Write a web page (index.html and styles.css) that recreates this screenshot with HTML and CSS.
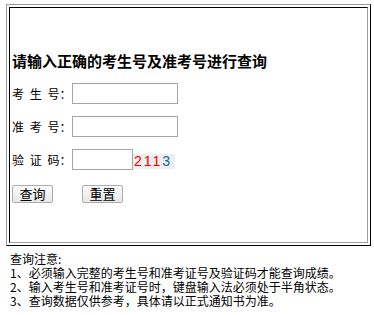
FILE: index.html
```html
<!DOCTYPE html>
<html lang="zh-CN">
<head>
    <meta charset="UTF-8">
    <meta name="viewport" content="width=device-width, initial-scale=1.0">
    <title>成绩查询</title>
    <link rel="stylesheet" href="styles.css">
</head>
<body>
    <div class="box">
        <div class="cell">
            <h3 class="title">请输入正确的考生号及准考号进行查询</h3>
            <form class="query-form">
                <div class="row">
                    <label for="ksh">考 生 号：</label>
                    <input type="text" id="ksh" class="field">
                </div>
                <div class="row">
                    <label for="zkh">准 考 号：</label>
                    <input type="text" id="zkh" class="field">
                </div>
                <div class="row">
                    <label for="yzm">验 证 码：</label>
                    <input type="text" id="yzm" class="field short">
                    <span class="code"><span class="red">2</span><span class="red">1</span><span class="red">1</span><span class="blue">3</span></span>
                </div>
                <div class="buttons">
                    <button type="submit" class="btn">查询</button>
                    <button type="reset" class="btn">重置</button>
                </div>
            </form>
        </div>
    </div>
    <div class="notes">
        <p>查询注意:</p>
        <p>1、必须输入完整的考生号和准考证号及验证码才能查询成绩。</p>
        <p>2、输入考生号和准考证号时，键盘输入法必须处于半角状态。</p>
        <p>3、查询数据仅供参考，具体请以正式通知书为准。</p>
    </div>
</body>
</html>
```

FILE: styles.css
```css
body {
    margin: 0;
    padding: 4px 0 0 6px;
    font-family: "Noto Sans CJK SC", sans-serif;
    font-size: 12px;
    color: #000;
    background: #fff;
}
.box {
    width: 359px;
    height: 236px;
    padding: 2px;
    border: 1px solid #000;
    border-top-color: #999;
    border-left-color: #999;
}
.cell {
    height: 100%;
    box-sizing: border-box;
    border: 1px solid #a0a0a0;
    border-top-color: #000;
    border-left-color: #000;
    padding: 43px 0 0 2px;
}
.title {
    margin: 0;
    font-size: 15px;
    line-height: 20px;
    font-weight: bold;
}
.row {
    display: flex;
    align-items: center;
    height: 21px;
    margin-top: 12px;
}
.row label {
    width: 60px;
    word-spacing: 3px;
    line-height: 21px;
}
.field {
    width: 106px;
    height: 21px;
    box-sizing: border-box;
    margin: 0;
    padding: 0 2px;
    border: 1px solid #a5a5a5;
    font-size: 12px;
}
.field.short {
    width: 61px;
}
.code {
    display: inline-block;
    height: 15px;
    width: 41px;
    padding-left: 1px;
    margin-top: 4px;
    background: #eeeeee;
    font-family: "Liberation Sans", sans-serif;
    font-size: 14px;
    line-height: 15px;
    letter-spacing: 2px;
}
.red {
    color: #ee0000;
}
.blue {
    color: #0066bb;
}
.buttons {
    display: flex;
    gap: 29px;
    margin-top: 15px;
}
.btn {
    width: 41px;
    height: 18px;
    padding: 0;
    font-family: "Noto Sans CJK SC", sans-serif;
    font-size: 13px;
    line-height: 16px;
    color: #000;
    background: linear-gradient(#fbfbfb, #e8e8e8);
    border: 1px solid #acacac;
    border-radius: 2px;
}
.notes {
    margin-top: 6px;
    padding-left: 4px;
}
.notes p {
    margin: 0;
    line-height: 14px;
}
```
